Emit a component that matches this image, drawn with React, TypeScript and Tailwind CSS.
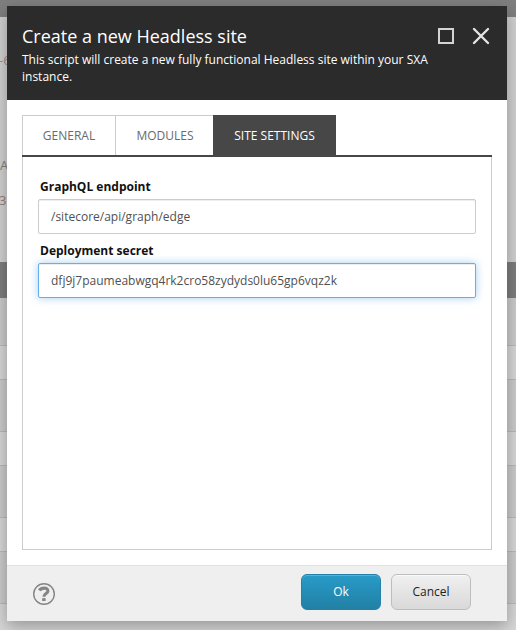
import React from "react";

const rows = [
  { h: "h-[48px]", bg: "bg-[#cacaca]" },
  { h: "h-[34px]", bg: "bg-[#d6d6d6]" },
  { h: "h-[52px]", bg: "bg-[#cacaca]" },
  { h: "h-[34px]", bg: "bg-[#d6d6d6]" },
  { h: "h-[52px]", bg: "bg-[#cacaca]" },
  { h: "h-[34px]", bg: "bg-[#d6d6d6]" },
  { h: "h-[52px]", bg: "bg-[#cacaca]" },
];

function Backdrop() {
  return (
    <div className="flex h-full flex-col bg-[#d6d6d6] text-[13px] leading-5 text-[#858080]">
      <div className="h-[17px] bg-[#7f7f7f]" />
      <div className="flex h-[245px] flex-col bg-[#d0d0d0] pt-[33px]">
        <span className="-ml-px text-[#a58b8b]">-6</span>
        <span className="mt-[85px]">A</span>
        <span className="mt-[15px] -ml-px text-[#947f7f]">3</span>
      </div>
      <div className="h-9 bg-[#7d7d7d]" />
      {rows.map((r, i) => (
        <div key={i} className={`${r.h} ${r.bg} border-b border-[#b8b8b8]`} />
      ))}
    </div>
  );
}

function Field({ label, value, focused = false }: { label: string; value: string; focused?: boolean }) {
  return (
    <label className="block">
      <span className="block h-[21px] pl-[2px] text-[12px] leading-[18px] font-bold text-[#111]">{label}</span>
      <input
        readOnly
        value={value}
        className={`block h-[35px] w-full rounded-[2px] border bg-white px-3 text-[12px] text-[#505050] outline-none ${
          focused
            ? "border-[#66afe9] shadow-[inset_0_1px_1px_rgba(0,0,0,0.075),0_0_8px_rgba(102,175,233,0.6)]"
            : "border-[#ccc] shadow-[inset_0_1px_1px_rgba(0,0,0,0.075)]"
        }`}
      />
    </label>
  );
}

export default function App() {
  return (
    <main className="relative h-[630px] w-[516px] overflow-hidden font-['Open_Sans','Noto_Sans',sans-serif]">
      <Backdrop />
      <section className="absolute top-[6px] left-[7px] flex h-[615px] w-[500px] flex-col bg-white shadow-[0_5px_15px_rgba(0,0,0,0.3)]">
        <header className="flex h-[94px] shrink-0 justify-between bg-[#2b2b2b] pt-[18px] pr-[17px] pl-[15px] text-white">
          <div className="w-[412px]">
            <h1 className="text-[18px] leading-6">Create a new Headless site</h1>
            <p className="mt-[3px] text-[12px] leading-[17px]">
              This script will create a new fully functional Headless site within your SXA instance.
            </p>
          </div>
          <div className="flex h-6 items-center gap-[18px]">
            <span className="size-4 border-2 border-[#d4d4d4]" />
            <svg className="size-[18px]" viewBox="0 0 18 18" fill="none" stroke="#e4e4e4" strokeWidth="2.4" strokeLinecap="round">
              <path d="M2 2 16 16M16 2 2 16" />
            </svg>
          </div>
        </header>

        <div className="flex grow flex-col px-[15px] pt-[15px] pb-[15px]">
          <nav className="flex h-[42px] shrink-0 border-b-2 border-[#474747] text-[12px] text-[#6a6a6a]">
            <button className="w-[94px] border-t border-r border-l border-[#ccc]">GENERAL</button>
            <button className="w-[97px] border-t border-[#ccc] pl-px">MODULES</button>
            <button className="w-[123px] border-t border-[#474747] bg-[#474747] text-white">SITE SETTINGS</button>
          </nav>
          <div className="flex grow flex-col gap-2 border border-t-0 border-[#ccc] px-[15px] pt-[21px]">
            <Field label="GraphQL endpoint" value="/sitecore/api/graph/edge" />
            <Field label="Deployment secret" value="dfj9j7paumeabwgq4rk2cro58zydyds0lu65gp6vqz2k" focused />
          </div>
        </div>

        <footer className="flex h-[56px] shrink-0 items-start border-t border-[#e0e0e0] bg-[#efefef] pt-2 pr-9 pl-[26px] text-[12px]">
          <svg className="mt-[9px] size-[22px]" viewBox="0 0 22 22" fill="none" stroke="#858585">
            <circle cx="11" cy="11" r="10.3" strokeWidth="1.4" />
            <path d="M6.4 7.4C8 4.6 14.9 3.9 14.9 7.9 14.9 10.7 10.9 10.4 10.9 13.8" strokeWidth="3.1" />
            <path d="M10.9 15.1V18" strokeWidth="3.4" />
          </svg>
          <button className="ml-auto h-9 w-20 rounded-[6px] border border-[#2381a7] bg-linear-to-b from-[#289bc8] to-[#2280a5] text-white shadow-[inset_0_1px_#5bafd0]">
            Ok
          </button>
          <button className="ml-[10px] h-9 w-20 rounded-[6px] border border-[#bdbdbd] bg-linear-to-b from-[#f0f0f0] to-[#d9d9d9] text-[#222] shadow-[inset_0_1px_#fafafa]">
            Cancel
          </button>
        </footer>
      </section>
    </main>
  );
}
